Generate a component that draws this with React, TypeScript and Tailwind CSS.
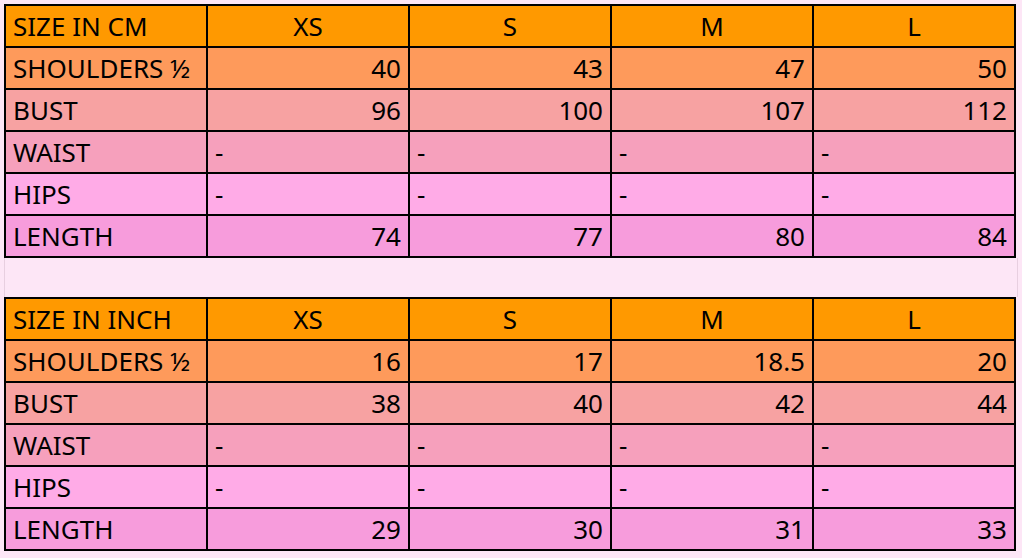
import React from 'react';

type Row = { label: string; values: string[]; bg: string; align: 'left' | 'right' };

const ROW_BG = {
  shoulders: 'bg-[#fe9a5b]',
  bust: 'bg-[#f7a2a2]',
  waist: 'bg-[#f6a0bc]',
  hips: 'bg-[#ffabe7]',
  length: 'bg-[#f79cdc]',
};

const cmRows: Row[] = [
  { label: 'SHOULDERS ½', values: ['40', '43', '47', '50'], bg: ROW_BG.shoulders, align: 'right' },
  { label: 'BUST', values: ['96', '100', '107', '112'], bg: ROW_BG.bust, align: 'right' },
  { label: 'WAIST', values: ['-', '-', '-', '-'], bg: ROW_BG.waist, align: 'left' },
  { label: 'HIPS', values: ['-', '-', '-', '-'], bg: ROW_BG.hips, align: 'left' },
  { label: 'LENGTH', values: ['74', '77', '80', '84'], bg: ROW_BG.length, align: 'right' },
];

const inchRows: Row[] = [
  { label: 'SHOULDERS ½', values: ['16', '17', '18.5', '20'], bg: ROW_BG.shoulders, align: 'right' },
  { label: 'BUST', values: ['38', '40', '42', '44'], bg: ROW_BG.bust, align: 'right' },
  { label: 'WAIST', values: ['-', '-', '-', '-'], bg: ROW_BG.waist, align: 'left' },
  { label: 'HIPS', values: ['-', '-', '-', '-'], bg: ROW_BG.hips, align: 'left' },
  { label: 'LENGTH', values: ['29', '30', '31', '33'], bg: ROW_BG.length, align: 'right' },
];

const sizes = ['XS', 'S', 'M', 'L'];

const SizeTable: React.FC<{ title: string; rows: Row[] }> = ({ title, rows }) => (
  <div className="grid grid-cols-[repeat(5,200px)] auto-rows-[40px] gap-[2px] bg-black p-[2px] w-[1012px]">
    <div className="bg-[#ff9900] px-[7px] flex items-center">{title}</div>
    {sizes.map((s) => (
      <div key={s} className="bg-[#ff9900] flex items-center justify-center">
        {s}
      </div>
    ))}
    {rows.map((row) => (
      <React.Fragment key={row.label}>
        <div className={`${row.bg} px-[7px] flex items-center`}>{row.label}</div>
        {row.values.map((v, i) => (
          <div
            key={i}
            className={`${row.bg} px-[7px] flex items-center ${
              row.align === 'right' ? 'justify-end' : 'justify-start'
            }`}
          >
            {v}
          </div>
        ))}
      </React.Fragment>
    ))}
  </div>
);

const App: React.FC = () => {
  return (
    <div className="min-h-screen bg-[#fde6f6] pl-[4px] pt-[4px] text-black text-[26px] font-['Noto_Sans',sans-serif] leading-none">
      <SizeTable title="SIZE IN CM" rows={cmRows} />
      <div className="h-[39px] w-[1014px] border-x border-[#e8cfe0]" />
      <SizeTable title="SIZE IN INCH" rows={inchRows} />
    </div>
  );
};

export default App;
